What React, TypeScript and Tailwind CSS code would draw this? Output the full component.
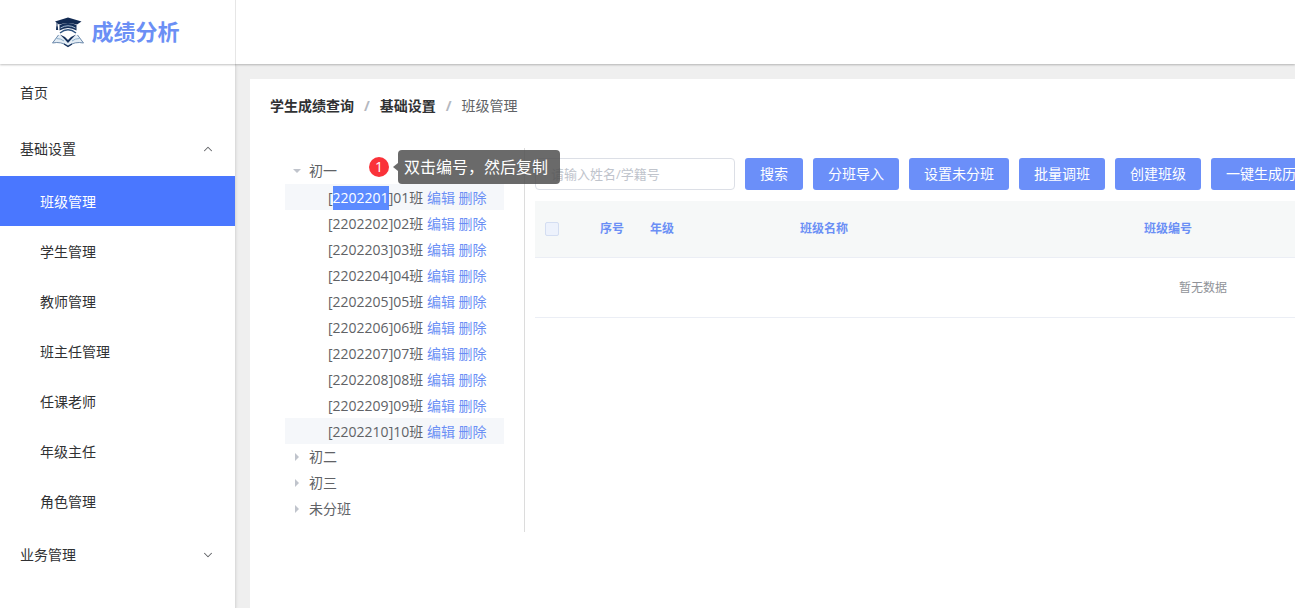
import React, { useState } from 'react';
import { ChevronDown, ChevronUp } from 'lucide-react';

type ClassItem = {
  code: string;
  name: string;
};

const subMenus = ['班级管理', '学生管理', '教师管理', '班主任管理', '任课老师', '年级主任', '角色管理'];

const actions = ['搜索', '分班导入', '设置未分班', '批量调班', '创建班级', '一键生成历史班级'];

const classes: ClassItem[] = [
  { code: '2202201', name: '01班' },
  { code: '2202202', name: '02班' },
  { code: '2202203', name: '03班' },
  { code: '2202204', name: '04班' },
  { code: '2202205', name: '05班' },
  { code: '2202206', name: '06班' },
  { code: '2202207', name: '07班' },
  { code: '2202208', name: '08班' },
  { code: '2202209', name: '09班' },
  { code: '2202210', name: '10班' },
];

const Logo = () => (
  <svg width="34" height="32" viewBox="0 0 34 32" aria-hidden="true">
    {/* book */}
    <path d="M7.500 18.500 L1.500 27 Q10 25 17 30 Q24 25 32.500 27 L26.500 18.500 Q21 20 17 24.500 Q13 20 7.500 18.500Z" fill="#e4edf5" />
    <path d="M7.500 19 L1.500 27 Q10 25.200 17 30 Q24 25.200 32.500 27 L26.500 19" fill="none" stroke="#5d7ea3" strokeWidth="0.9" />
    <path d="M5.500 22.500 Q10 22.500 13 25 M28.500 22.500 Q24 22.500 21 25" fill="none" stroke="#8fb0cc" strokeWidth="1" />
    <path d="M9 18.500 Q13.500 20 17 24 Q20.500 20 25 18.500 Q21 22.500 17 27 Q13 22.500 9 18.500Z" fill="#16305a" />
    <path d="M13 28 L17 30.500 L21 28" fill="none" stroke="#16305a" strokeWidth="1.2" />
    {/* cap */}
    <path d="M8.500 9 L8.500 14.500 Q17 9.500 25.500 14.500 L25.500 9 Q17 5 8.500 9Z" fill="#16305a" />
    <path d="M9.500 12 Q17 7.500 24.500 12" fill="none" stroke="#b9cde0" strokeWidth="0.9" />
    <path d="M9 17 Q17 10.500 25 17" fill="none" stroke="#2f5380" strokeWidth="1.4" />
    <path d="M17 1.500 L30.500 5.500 L26 8.500 Q17 5.500 8 8.500 L4 5.500Z" fill="#122a52" />
    <path d="M6 6.500 L6 11" stroke="#16305a" strokeWidth="1" />
    <path d="M5.200 10.500 L6.800 10.500 L7.200 14 L5 14Z" fill="#16305a" />
  </svg>
);

const Caret = ({ open }: { open?: boolean }) => (
  <span className="flex w-6 shrink-0 justify-center">
    <svg width="8" height="8" viewBox="0 0 8 8" fill="#c0c4cc" aria-hidden="true">
      {open ? <path d="M0 2h8L4 6z" /> : <path d="M2 0v8l4-4z" />}
    </svg>
  </span>
);

const Sidebar = () => {
  const [active, setActive] = useState('班级管理');

  return (
    <nav className="z-10 w-[236px] shrink-0 border-r border-[#dcdcdc] bg-white text-[#303133] shadow-sm">
      <a href="#home" className="flex h-14 items-center px-5 pt-0.5">首页</a>
      <button type="button" className="flex h-14 w-full items-center justify-between px-5 pt-0.5">
        基础设置
        <ChevronUp size={14} strokeWidth={1.8} className="text-[#606266]" />
      </button>
      <ul>
        {subMenus.map((item) => (
          <li key={item}>
            <a
              href={`#${item}`}
              onClick={() => setActive(item)}
              className={`flex h-[50px] items-center px-10 pt-0.5 ${active === item ? 'bg-[#4a77ff] text-white' : ''}`}
            >
              {item}
            </a>
          </li>
        ))}
      </ul>
      <button type="button" className="flex h-14 w-full items-center justify-between px-5 pt-0.5">
        业务管理
        <ChevronDown size={14} strokeWidth={1.8} className="text-[#606266]" />
      </button>
    </nav>
  );
};

const Breadcrumb = () => (
  <div className="flex items-center gap-2.5 leading-5">
    <a href="#home" className="font-bold text-[#303133]">学生成绩查询</a>
    <span className="font-bold text-[#b4b8c0]">/</span>
    <a href="#settings" className="font-bold text-[#303133]">基础设置</a>
    <span className="font-bold text-[#b4b8c0]">/</span>
    <span className="text-[#606266]">班级管理</span>
  </div>
);

const ClassTree = () => (
  <div className="w-[255px] shrink-0 self-start border-r border-[#dcdcdc] py-2.5 pr-5 pl-[15px] leading-[28px] text-[#606266]">
    <div className="relative flex h-[26px] items-center">
      <Caret open />
      <span>初一</span>
      {/* step hint */}
      <div className="absolute -top-2 left-[84px] z-20 flex h-[34px] items-center">
        <span className="flex size-5 items-center justify-center rounded-full bg-[#fa3239] text-sm text-white">1</span>
        <span className="ml-1 border-y-4 border-r-5 border-y-transparent border-r-[#505050]/85" />
        <span className="rounded-sm bg-[#505050]/85 py-1 pr-3 pl-1.5 text-base leading-[26px] whitespace-nowrap text-white">
          双击编号，然后复制
        </span>
      </div>
    </div>
    <ul>
      {classes.map((c, i) => (
        <li
          key={c.code}
          className={`h-[26px] pl-[43px] whitespace-nowrap ${i === 0 || i === classes.length - 1 ? 'bg-[#f5f7fa]' : ''}`}
        >
          [<span className={i === 0 ? 'inline-block h-6 bg-[#5c8bff] leading-6 text-white' : ''}>{c.code}</span>]{c.name}{' '}
          <button type="button" className="text-[#6b8ff5]">编辑</button>{' '}
          <button type="button" className="text-[#6b8ff5]">删除</button>
        </li>
      ))}
    </ul>
    {['初二', '初三', '未分班'].map((name) => (
      <div key={name} className="flex h-[26px] items-center">
        <Caret />
        <span>{name}</span>
      </div>
    ))}
  </div>
);

const ClassTable = () => (
  <table className="w-full min-w-[1336px] table-fixed border-separate border-spacing-0 text-xs">
    <colgroup>
      <col className="w-[55px]" />
      <col className="w-[50px]" />
      <col className="w-[150px]" />
      <col className="w-[344px]" />
      <col className="w-[344px]" />
      <col />
    </colgroup>
    <thead>
      <tr className="h-[57px] bg-[#f6f8f8] text-left text-[#6b8ff5] *:border-b *:border-[#ebeef5] *:px-2.5">
        <th>
          <input
            type="checkbox"
            aria-label="全选"
            className="block size-3.5 appearance-none rounded-xs border border-[#d4def2] bg-[#edf2fc]"
          />
        </th>
        <th>序号</th>
        <th>年级</th>
        <th>班级名称</th>
        <th>班级编号</th>
        <th />
      </tr>
    </thead>
    <tbody>
      <tr className="h-[60px]">
        <td colSpan={6} className="border-b border-[#ebeef5] text-center text-[#909399]">暂无数据</td>
      </tr>
    </tbody>
  </table>
);

export default function App() {
  const [keyword, setKeyword] = useState('');

  return (
    <div className="flex h-screen flex-col overflow-hidden bg-[#efefef] font-['Open_Sans','Noto_Sans_CJK_SC',sans-serif] text-sm">
      <header className="z-20 flex h-16 shrink-0 bg-white shadow-[0_1px_2px_rgba(0,0,0,0.25)]">
        <div className="flex w-[236px] items-center justify-center gap-1.5 border-r border-[#e6e6e6] pr-1">
          <Logo />
          <span className="text-[22px] font-bold text-[#6b8ff5]">成绩分析</span>
        </div>
      </header>

      <div className="flex min-h-0 flex-1">
        <Sidebar />
        <main className="mt-[15px] ml-3.5 min-w-0 flex-1 overflow-hidden bg-white py-[17px] pl-5">
          <Breadcrumb />
          <div className="mt-8 flex">
            <ClassTree />
            <section className="ml-2.5 min-w-0 flex-1 pt-2.5">
              <div className="flex gap-2.5 whitespace-nowrap">
                <input
                  type="text"
                  aria-label="姓名/学籍号"
                  placeholder="请输入姓名/学籍号"
                  value={keyword}
                  onChange={(e) => setKeyword(e.target.value)}
                  className="h-8 w-[200px] shrink-0 rounded border border-[#dcdfe6] px-[15px] text-[13px] placeholder:text-[#c0c4cc]"
                />
                {actions.map((label) => (
                  <button key={label} type="button" className="h-8 shrink-0 rounded-[3px] bg-[#6b8ff9] px-[15px] text-white">
                    {label}
                  </button>
                ))}
              </div>
              <div className="mt-[11px]">
                <ClassTable />
              </div>
            </section>
          </div>
        </main>
      </div>
    </div>
  );
}
